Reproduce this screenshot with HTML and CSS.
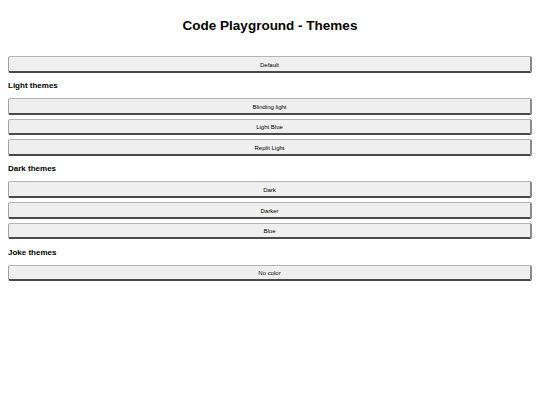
FILE: index.html
```html
<!DOCTYPE html>
<html lang="en">
<head>
<meta charset="utf-8">
<title>Code Playground - Themes</title>
<link rel="stylesheet" href="styles.css">
</head>
<body>
  <h1 class="page-title">Code Playground - Themes</h1>
  <main class="theme-list">
    <div class="theme-group">
      <button class="theme-btn">Default</button>
    </div>
    <h2 class="group-title">Light themes</h2>
    <div class="theme-group">
      <button class="theme-btn">Blinding light</button>
      <button class="theme-btn">Light Blue</button>
      <button class="theme-btn">Replit Light</button>
    </div>
    <h2 class="group-title">Dark themes</h2>
    <div class="theme-group">
      <button class="theme-btn">Dark</button>
      <button class="theme-btn">Darker</button>
      <button class="theme-btn">Blue</button>
    </div>
    <h2 class="group-title">Joke themes</h2>
    <div class="theme-group">
      <button class="theme-btn">No color</button>
    </div>
  </main>
</body>
</html>
```
FILE: styles.css
```css
html, body {
  margin: 0;
  background: #ffffff;
  color: #000000;
  font-family: "Liberation Sans", Arial, sans-serif;
}

body {
  padding: 0 8px;
}

.page-title {
  margin: 0;
  padding-top: 18px;
  height: 56px;
  box-sizing: border-box;
  font-size: 13.5px;
  line-height: 16px;
  font-weight: bold;
  text-align: center;
}

.theme-list {
  display: flex;
  flex-direction: column;
}

.group-title {
  margin: 8.5px 0 6.9px;
  font-size: 8px;
  line-height: 10px;
  font-weight: bold;
}

.theme-group {
  display: flex;
  flex-direction: column;
  gap: 4.1px;
}

.theme-btn {
  display: block;
  width: 100%;
  height: 16.6px;
  margin: 0;
  padding: 1.5px 0 0;
  font-family: "Liberation Sans", Arial, sans-serif;
  font-size: 6px;
  line-height: 12px;
  color: #000000;
  background: #efefef;
  border-style: solid;
  border-width: 1px 2px 2px 1px;
  border-color: #b4b4b4 #8a8a8a #4a4a4a #a0a0a0;
  border-radius: 2px;
}
```
